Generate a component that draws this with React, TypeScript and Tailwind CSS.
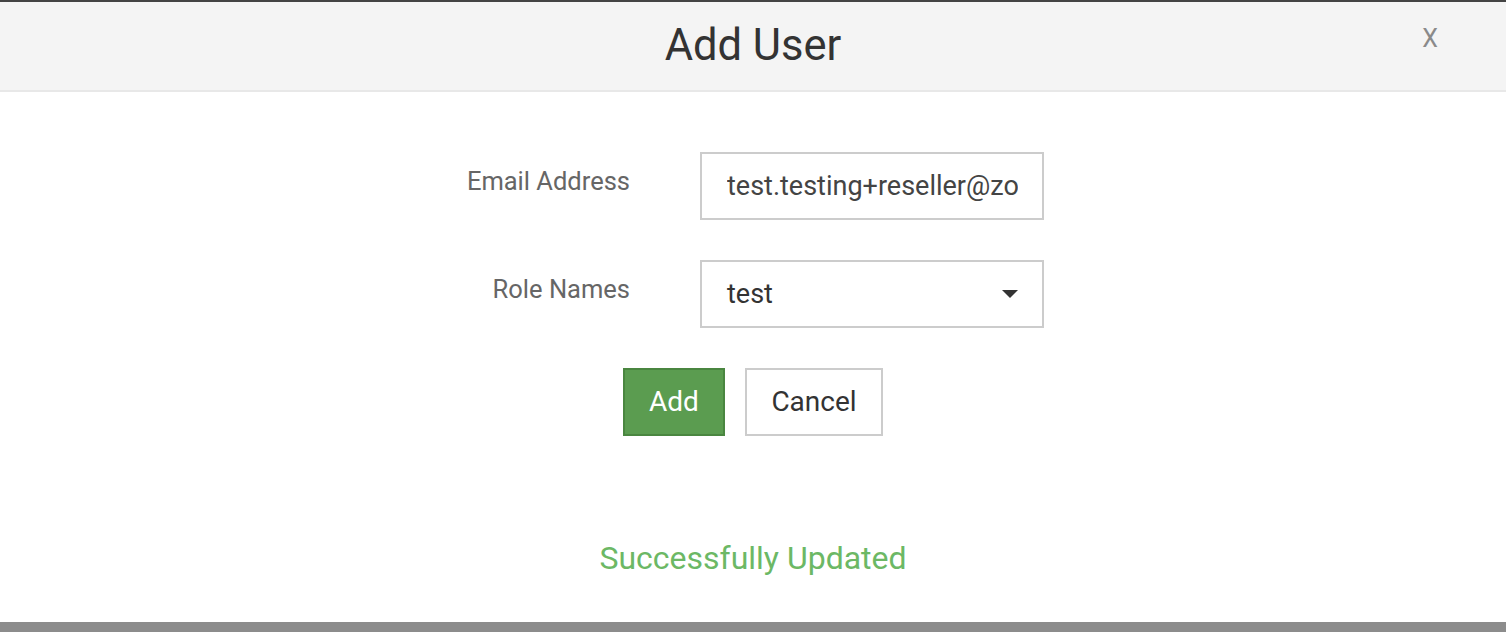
import React from 'react';

const font = { fontFamily: 'Roboto, "Liberation Sans", sans-serif' };

export default function App() {
  return (
    <div className="w-[1506px] h-[632px] bg-white flex flex-col overflow-hidden" style={font}>
      <div className="h-[2px] bg-[#444444]" />

      {/* header */}
      <div className="relative h-[90px] bg-[#f4f4f4] border-b-2 border-[#e8e8e8] flex items-center justify-center">
        <h1 className="text-[43.5px] leading-none text-[#333333] font-normal">Add User</h1>
        <button className="absolute right-[68px] top-[24px] text-[25px] text-[#8a8a8a] leading-none">X</button>
      </div>

      {/* form */}
      <div className="flex-1 flex flex-col items-center pt-[60px]">
        <div className="flex flex-col gap-[40px]">
          <div className="flex gap-[70px]">
            <label className="w-[168px] text-right text-[25.5px] text-[#666666] pt-[10px] whitespace-nowrap">Email Address</label>
            <input
              readOnly
              value="test.testing+reseller@zoho.com"
              className="w-[344px] h-[68px] border-2 border-[#cccccc] pl-[25px] pr-[24px] text-[27px] text-[#444444] outline-none bg-white"
              style={font}
            />
          </div>
          <div className="flex gap-[70px]">
            <label className="w-[168px] text-right text-[25.5px] text-[#666666] pt-[10px] whitespace-nowrap">Role Names</label>
            <div className="w-[344px] h-[68px] border-2 border-[#cccccc] flex items-center justify-between pl-[25px] pr-[24px]">
              <span className="text-[27px] text-[#333333]">test</span>
              <svg width="16" height="8" viewBox="0 0 16 8">
                <path d="M0 0 L16 0 L8 8 Z" fill="#333333" />
              </svg>
            </div>
          </div>
        </div>

        <div className="flex gap-[20px] mt-[40px]">
          <button className="w-[102px] h-[68px] bg-[#5b9c50] border-2 border-[#4a8640] text-white text-[28px]">Add</button>
          <button className="w-[138px] h-[68px] bg-white border-2 border-[#cccccc] text-[#333333] text-[28px]">Cancel</button>
        </div>

        <p className="mt-[98px] text-[32px] text-[#6cb865]">Successfully Updated</p>
      </div>

      <div className="h-[10px] bg-[#8c8c8c]" />
    </div>
  );
}
